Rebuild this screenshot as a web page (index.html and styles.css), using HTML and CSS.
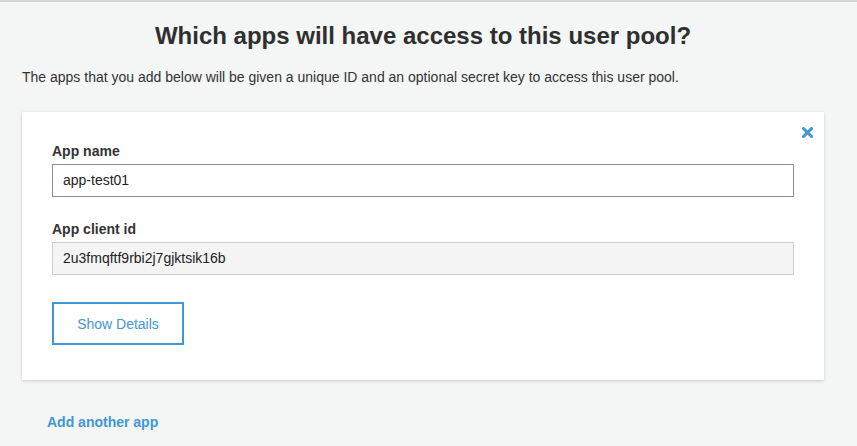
FILE: index.html
```html
<!DOCTYPE html>
<html>
<head>
<meta charset="utf-8">
<link rel="stylesheet" href="styles.css">
</head>
<body>
<div class="page">
  <h1 class="title">Which apps will have access to this user pool?</h1>
  <p class="intro">The apps that you add below will be given a unique ID and an optional secret key to access this user pool.</p>
  <div class="card">
    <button class="close" aria-label="Remove">
      <svg width="11" height="11" viewBox="0 0 11 11"><path d="M1.5 1.5 L9.5 9.5 M9.5 1.5 L1.5 9.5" stroke="#3f97d6" stroke-width="3" stroke-linecap="square"/></svg>
    </button>
    <label class="label">App name</label>
    <div class="input">app-test01</div>
    <label class="label second">App client id</label>
    <div class="input readonly">2u3fmqftf9rbi2j7gjktsik16b</div>
    <button class="details">Show Details</button>
  </div>
  <a class="add" href="#">Add another app</a>
</div>
</body>
</html>
```
FILE: styles.css
```css
html, body {
  margin: 0;
  padding: 0;
}
body {
  background: #f4f5f5;
  font-family: "Liberation Sans", Arial, sans-serif;
  color: #333;
  border-top: 2px solid #d4d6d6;
  height: 444px;
  overflow: hidden;
}
.page {
  padding: 0 33px 0 22px;
}
.title {
  margin: 0;
  padding-top: 20px;
  text-align: center;
  font-size: 24px;
  font-weight: bold;
  line-height: 28px;
  color: #2f2f2f;
}
.intro {
  margin: 19px 0 0;
  font-size: 14px;
  line-height: 16px;
  color: #333;
}
.card {
  position: relative;
  margin-top: 27px;
  background: #fff;
  box-shadow: 0 1px 3px rgba(0,0,0,0.18);
  padding: 31px 30px 35px 30px;
  display: flex;
  flex-direction: column;
  align-items: flex-start;
}
.close {
  position: absolute;
  top: 15px;
  right: 11px;
  border: 0;
  background: none;
  padding: 0;
  width: 11px;
  height: 11px;
  display: flex;
}
.label {
  font-size: 14px;
  font-weight: bold;
  line-height: 16px;
  color: #333;
  margin-bottom: 5px;
}
.label.second {
  margin-top: 24px;
}
.input {
  box-sizing: border-box;
  width: 100%;
  height: 33px;
  border: 1px solid #8b9297;
  padding: 0 10px;
  font-size: 14px;
  line-height: 31px;
  color: #222;
  background: #fff;
}
.input.readonly {
  background: #f4f4f4;
  border-color: #cfcfcf;
}
.details {
  margin-top: 27px;
  box-sizing: border-box;
  width: 132px;
  height: 43px;
  border: 2px solid #3f97d6;
  background: #fff;
  color: #3f97d6;
  font-family: "Liberation Sans", Arial, sans-serif;
  font-size: 14px;
  padding: 0;
}
.add {
  display: block;
  margin: 34px 0 0 25px;
  font-size: 14px;
  font-weight: bold;
  color: #3f97d6;
  text-decoration: none;
  line-height: 16px;
}
```
